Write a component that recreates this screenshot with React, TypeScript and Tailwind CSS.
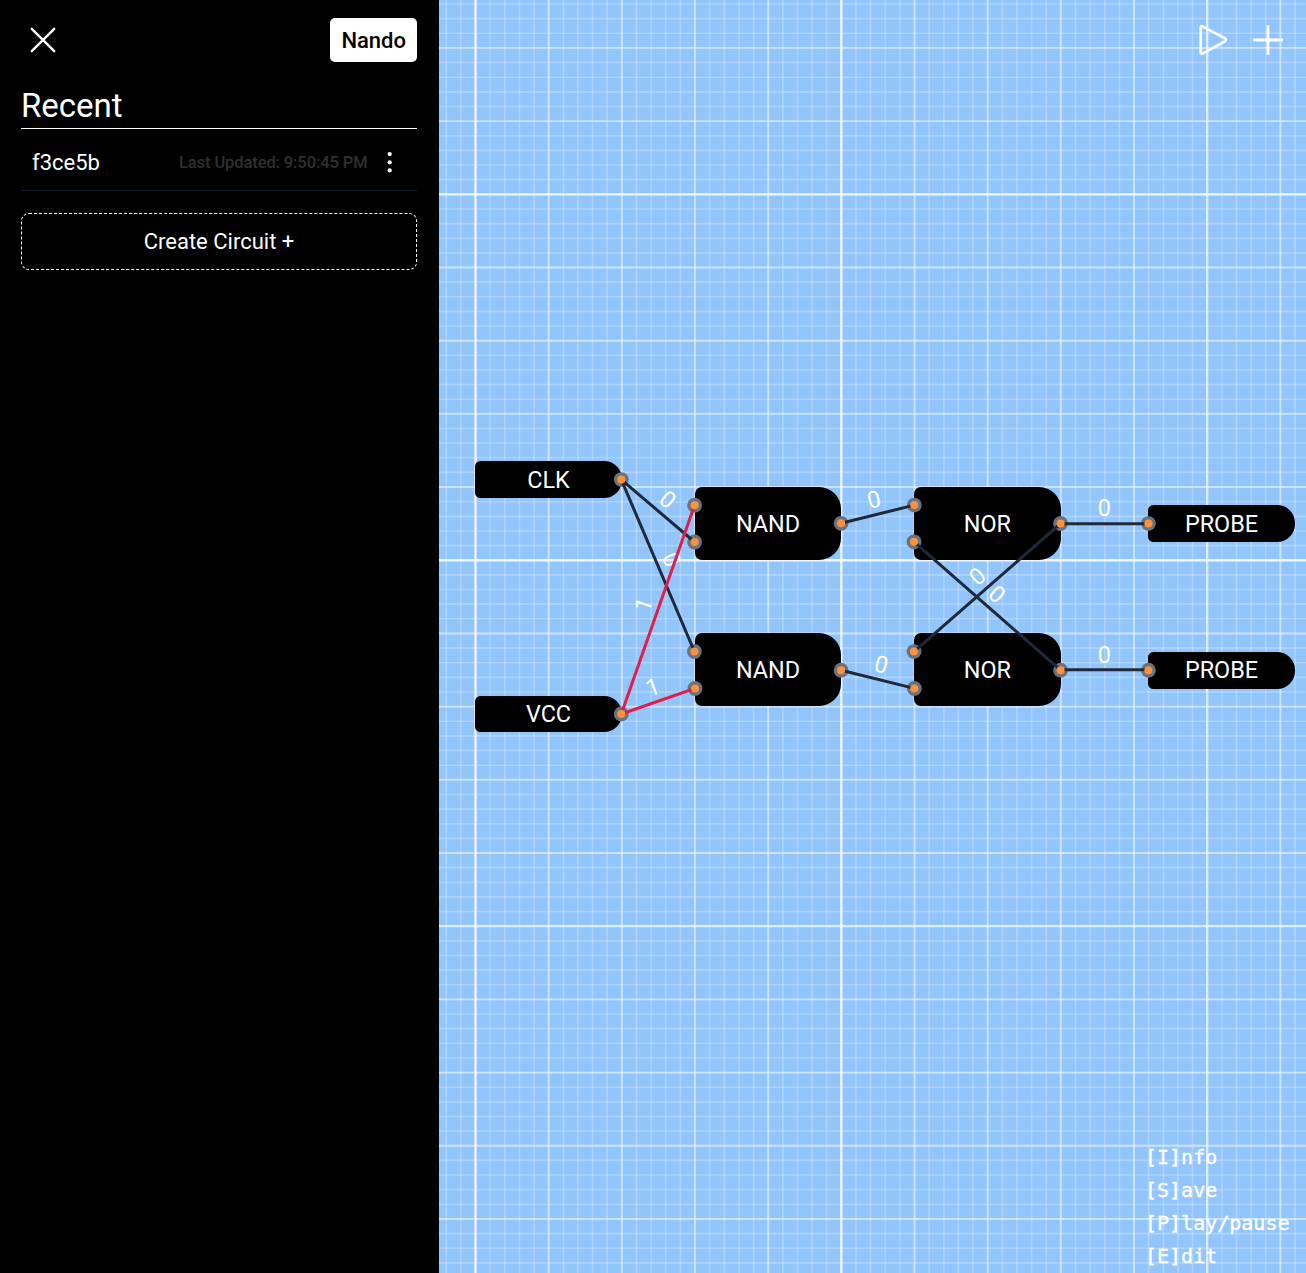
type Point = [number, number];

interface Gate {
  label: string;
  x: number;
  y: number;
  kind: "terminal" | "gate";
}

const gates: Gate[] = [
  { label: "CLK", x: 36.3, y: 461.4, kind: "terminal" },
  { label: "VCC", x: 36.3, y: 695.6, kind: "terminal" },
  { label: "NAND", x: 255.8, y: 487.1, kind: "gate" },
  { label: "NAND", x: 255.8, y: 632.9, kind: "gate" },
  { label: "NOR", x: 475.2, y: 487.1, kind: "gate" },
  { label: "NOR", x: 475.2, y: 632.9, kind: "gate" },
  { label: "PROBE", x: 709.3, y: 505.45, kind: "terminal" },
  { label: "PROBE", x: 709.3, y: 652, kind: "terminal" },
];

const ports: Point[] = [
  [621.3, 479.6], [621.3, 714], [694.6, 505.2], [694.6, 542], [694.4, 651.5], [695, 688.4],
  [841.1, 523.3], [841.1, 670.2], [914.3, 505.1], [914, 541.8], [914, 651.6], [914.3, 688.4],
  [1060.6, 523.5], [1060.6, 670.2], [1148.4, 523.6], [1148.4, 670.2],
];

interface Wire {
  from: Point;
  to: Point;
  on?: boolean;
  label: string;
  at: Point;
  angle: number;
}

const wires: Wire[] = [
  { from: [621.3, 479.6], to: [694.6, 542], label: "0", at: [667.8, 499.5], angle: 40 },
  { from: [621.3, 479.6], to: [694.4, 651.5], label: "0", at: [671.3, 559.7], angle: 67 },
  { from: [621.3, 714], to: [694.6, 505.2], on: true, label: "1", at: [643.5, 604.8], angle: -71 },
  { from: [621.3, 714], to: [695, 688.4], on: true, label: "1", at: [652.8, 687.2], angle: -19 },
  { from: [841.1, 523.3], to: [914.3, 505.1], label: "0", at: [874, 499.6], angle: -14 },
  { from: [841.1, 670.2], to: [914.3, 688.4], label: "0", at: [881.3, 664.5], angle: 14 },
  { from: [914, 541.8], to: [1060.6, 670.2], label: "0", at: [997, 594.3], angle: 41 },
  { from: [914, 651.6], to: [1060.6, 523.5], label: "0", at: [977.4, 576.3], angle: -41 },
  { from: [1060.6, 523.7], to: [1148.4, 523.7], label: "0", at: [1104.4, 507.8], angle: 0 },
  { from: [1060.6, 669.7], to: [1148.4, 669.7], label: "0", at: [1104.4, 654.6], angle: 0 },
];

const STEP_X = 14.634;
const STEP_Y = 14.638;
const range = (a: number, b: number) => Array.from({ length: b - a + 1 }, (_, i) => a + i);
const columns = range(-2, 56);
const rows = range(-13, 74);
const lineWidth = (i: number) => (i % 25 === 0 ? 2.3 : i % 5 === 0 ? 1.9 : 1.6);
const lineOpacity = (i: number) => (i === 50 ? 0.68 : i % 25 === 0 ? 0.85 : i % 5 === 0 ? 0.52 : 0.23);

function Grid() {
  return (
    <svg className="absolute inset-0 h-full w-full" stroke="white">
      {columns.map((i) => (
        <line key={"c" + i} x1={36.5 + i * STEP_X} x2={36.5 + i * STEP_X} y1="0" y2="1273" strokeWidth={lineWidth(i)} opacity={lineOpacity(i)} />
      ))}
      {rows.map((i) => (
        <line key={"r" + i} y1={194.3 + i * STEP_Y} y2={194.3 + i * STEP_Y} x1="0" x2="867" strokeWidth={lineWidth(i)} opacity={lineOpacity(i)} />
      ))}
    </svg>
  );
}

function Sidebar() {
  return (
    <aside className="flex w-[439px] shrink-0 flex-col bg-black pl-[21px] pr-[22px] pt-[18px] text-[22px] leading-[33px]">
      <div className="flex h-11 items-center justify-between">
        <button className="ml-[8px]">
          <svg width="27" height="27" viewBox="0 0 27 27" stroke="white" strokeWidth="2.4" strokeLinecap="round">
            <path d="M2.8 1.8 25.2 24.2M25.2 1.8 2.8 24.2" />
          </svg>
        </button>
        <button className="h-11 rounded-[5px] bg-white px-[11px] font-medium text-black">Nando</button>
      </div>
      <h1 className="mt-[22px] h-[45px] border-b border-white text-[33px] leading-[43px]">Recent</h1>
      <div className="flex h-[62px] items-center border-b border-[#0f172a] pl-[11px] pr-[16.5px] pt-[5px]">
        <span>f3ce5b</span>
        <span className="ml-auto text-[16.5px] font-medium tracking-[-0.1px] text-[#303030]">Last Updated: 9:50:45 PM</span>
        <svg className="ml-[11px]" width="22" height="22" viewBox="0 0 22 22" fill="white">
          <circle cx="10.7" cy="3.1" r="2.1" />
          <circle cx="10.7" cy="11.3" r="2.1" />
          <circle cx="10.7" cy="19.4" r="2.1" />
        </svg>
      </div>
      <button className="mt-[22px] h-[57px] rounded-[8px] border border-dashed border-white">Create Circuit +</button>
    </aside>
  );
}

function Block({ gate }: { gate: Gate }) {
  const size = gate.kind === "gate" ? "h-[73.3px] w-[146.4px] rounded-l-[7px] rounded-r-[22px]" : "h-[36.5px] w-[146.4px] rounded-l-[5.5px] rounded-r-[18px]";
  return (
    <div className={"absolute flex items-center justify-center bg-black pt-[1px] text-[23.4px] " + size} style={{ left: gate.x, top: gate.y }}>
      {gate.label}
    </div>
  );
}

function Canvas() {
  return (
    <main className="relative flex-1 overflow-hidden bg-[#93c5fd] text-[22px] leading-[33px]">
      <Grid />
      {gates.map((g, i) => (
        <Block key={i} gate={g} />
      ))}
      <svg className="absolute inset-0 h-full w-full" viewBox="439 0 867 1273">
        {ports.map(([x, y], i) => (
          <circle key={i} cx={x} cy={y} r="7.4" fill="#6b7280" />
        ))}
        {wires.map((w, i) => (
          <g key={i}>
            <text x={w.at[0]} y={w.at[1] + 8} textAnchor="middle" fill="white" fontSize="23.4" transform={`rotate(${w.angle} ${w.at[0]} ${w.at[1]})`}>
              {w.label}
            </text>
            <line x1={w.from[0]} y1={w.from[1]} x2={w.to[0]} y2={w.to[1]} stroke={w.on ? "#e11d48" : "#1f2937"} strokeWidth="3" />
          </g>
        ))}
        {ports.map(([x, y], i) => (
          <circle key={i} cx={x} cy={y} r="4" fill="#fb923c" />
        ))}
      </svg>
      <div className="absolute right-[22px] top-[23px] flex items-center gap-[22px]">
        <svg width="33" height="33" viewBox="0 0 33 33" fill="none" stroke="white" strokeWidth="2.6" strokeLinejoin="round" strokeLinecap="round">
          <path d="M4.7 4.6Q4.7 2.4 6.7 3.5L29 15.3Q31 16.8 29 18.3L6.7 30.5Q4.7 31.5 4.7 29.4Z" />
        </svg>
        <svg width="33" height="33" viewBox="0 0 33 33" stroke="white" strokeWidth="2.8">
          <path d="M17 2.2V32M2.2 17H32" />
        </svg>
      </div>
      <ul className="absolute left-[706px] top-[1141px] font-['DejaVu_Sans_Mono',monospace] text-[20px] leading-[33px] [-webkit-text-stroke:0.4px_white]">
        <li>[I]nfo</li>
        <li>[S]ave</li>
        <li>[P]lay/pause</li>
        <li>[E]dit</li>
      </ul>
    </main>
  );
}

export default function App() {
  return (
    <div className="flex h-[1273px] w-[1306px] overflow-hidden font-['Roboto',sans-serif] text-white">
      <Sidebar />
      <Canvas />
    </div>
  );
}
